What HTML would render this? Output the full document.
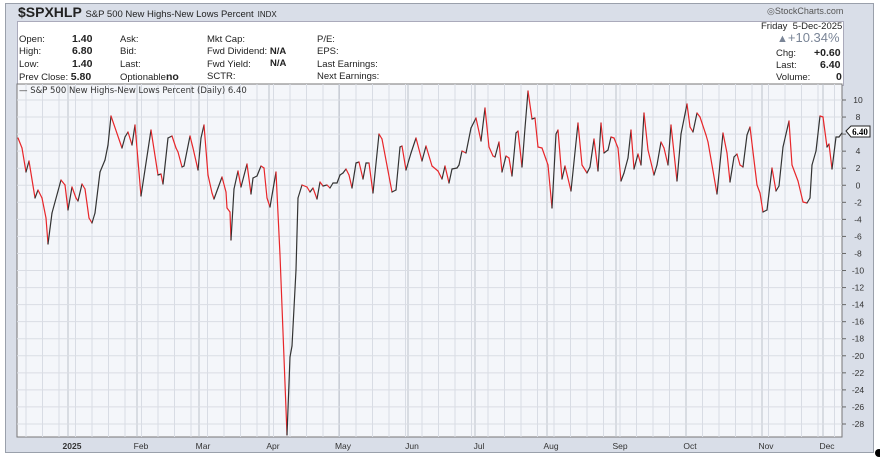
<!DOCTYPE html>
<html><head><meta charset="utf-8"><style>
body{margin:0;width:880px;height:457px;background:#fff;font-family:"Liberation Sans",sans-serif;overflow:hidden;position:relative}
.panel{position:absolute;left:5px;top:3px;width:867px;height:448px;background:#d9dee8;border:1px solid #9aa0ab}
.t{position:absolute;font-size:9.5px;color:#222;white-space:nowrap}
.b{font-weight:bold;font-size:10.5px}
.info{position:absolute;left:17px;top:21px;width:825px;height:63px;background:#fff;border:1px solid #aab}
</style></head><body>
<div class="panel"></div>
<div class="t" style="left:18px;top:4px;font-size:14px;font-weight:bold">$SPXHLP <span style="font-size:9.5px;font-weight:normal">S&amp;P 500 New Highs-New Lows Percent</span> <span style="font-size:8px;font-weight:normal">INDX</span></div>
<div class="t" style="left:767px;top:6px;color:#555;font-size:9px">◎StockCharts.com</div>
<div class="info"></div>
<div class="t" style="left:19px;top:34px">Open:</div><div class="t b" style="left:72px;top:33px">1.40</div>
<div class="t" style="left:19px;top:46px">High:</div><div class="t b" style="left:72px;top:45px">6.80</div>
<div class="t" style="left:19px;top:59px">Low:</div><div class="t b" style="left:72px;top:58px">1.40</div>
<div class="t" style="left:19px;top:71px">Prev Close: <b style="font-size:10.5px">5.80</b></div>
<div class="t" style="left:120px;top:34px">Ask:</div><div class="t" style="left:120px;top:46px">Bid:</div><div class="t" style="left:120px;top:59px">Last:</div><div class="t" style="left:120px;top:71px">Optionable<b style="font-size:10.5px">no</b></div>
<div class="t" style="left:207px;top:34px">Mkt Cap:</div><div class="t" style="left:207px;top:46px">Fwd Dividend: <b>N/A</b></div><div class="t" style="left:207px;top:59px">Fwd Yield:</div><div class="t" style="left:270px;top:58px;font-weight:bold">N/A</div><div class="t" style="left:207px;top:71px">SCTR:</div>
<div class="t" style="left:317px;top:34px">P/E:</div><div class="t" style="left:317px;top:46px">EPS:</div><div class="t" style="left:317px;top:59px">Last Earnings:</div><div class="t" style="left:317px;top:71px">Next Earnings:</div>
<div class="t" style="left:761px;top:21px">Friday&nbsp; 5-Dec-2025</div>
<div class="t" style="left:777px;top:30px;font-size:13px;color:#7a8597"><span style="font-size:11px">▲</span>+10.34%</div>
<div class="t" style="left:776px;top:48px">Chg:</div><div class="t b" style="left:814px;top:47px">+0.60</div>
<div class="t" style="left:776px;top:60px">Last:</div><div class="t b" style="left:820px;top:59px">6.40</div>
<div class="t" style="left:776px;top:72px">Volume:</div><div class="t b" style="left:836px;top:71px">0</div>
<svg style="position:absolute;left:0;top:0" width="880" height="457" id="s"></svg>
<div class="t" style="left:19px;top:86px;font-family:'DejaVu Sans',sans-serif;font-size:8.5px;color:#333">— S&amp;P 500 New Highs-New Lows Percent (Daily) 6.40</div>
<script>
var s=document.getElementById('s'),h='';
h+='<rect x="17" y="84" width="825" height="353" fill="#f4f6fa" stroke="#777"/>';
function Y(v){return 100+(10-v)*8.526}
for(var x=26;x<842;x+=16.5)h+='<line x1="'+x+'" y1="84" x2="'+x+'" y2="437" stroke="#d8dce4"/>';
var m=[[72,'2025'],[141,'Feb'],[203,'Mar'],[273,'Apr'],[343,'May'],[412,'Jun'],[479,'Jul'],[551,'Aug'],[620,'Sep'],[690,'Oct'],[766,'Nov'],[827,'Dec']];
m.forEach(function(a){h+='<line x1="'+(a[0]-4)+'" y1="84" x2="'+(a[0]-4)+'" y2="437" stroke="#bcc1ca"/>';h+='<text x="'+a[0]+'" y="449" font-size="8.5" fill="#333" text-anchor="middle" font-family="Liberation Sans"'+(a[1]=='2025'?' font-weight="bold"':'')+'>'+a[1]+'</text>'});
for(var v=10;v>=-28;v-=2){var y=Y(v);h+='<line x1="17" y1="'+y+'" x2="842" y2="'+y+'" stroke="#dadde4"/><line x1="842" y1="'+y+'" x2="846" y2="'+y+'" stroke="#666"/><text x="858" y="'+(y+3)+'" font-size="8.5" fill="#333" text-anchor="middle" font-family="Liberation Sans">'+v+'</text>'}
var p=[18,138,22,148,26,172,29,161,35,198,38,190,42,198,46,218,48,244,52,213,61,180,65,185,68,210,72,187,76,198,78,201,82,184,85,189,89,218,92,223,95,213,100,172,105,160,108,145,111,116,122,148,125,137,128,132,132,145,135,125,141,196,151,130,158,175,161,174,163,184,168,138,172,136,176,148,178,152,182,167,184,166,190,136,193,148,198,170,201,138,204,125,208,175,212,193,214,199,218,188,222,177,226,192,227,208,230,212,231,240,234,189,238,171,241,187,247,164,251,194,253,178,257,176,261,166,264,168,267,198,270,207,276,172,280,255,287,435,290,357,292,346,296,270,298,198,302,185,307,187,310,192,313,188,317,199,320,182,323,186,327,185,330,188,333,183,337,183,340,175,343,173,346,169,349,175,352,188,356,163,359,162,363,179,366,163,369,163,373,193,379,134,382,139,392,192,396,190,400,147,402,146,406,170,411,153,416,138,422,161,426,146,432,166,438,171,442,179,445,166,449,183,452,169,457,168,459,165,462,151,466,153,471,128,476,118,481,141,485,108,489,147,493,156,495,157,499,142,502,172,506,156,509,158,512,176,516,133,518,131,522,167,525,128,528,91,532,119,535,118,538,147,542,148,548,165,552,208,556,134,558,130,562,179,565,166,571,191,578,123,582,165,587,173,590,167,594,139,598,171,601,123,604,153,608,150,611,137,614,138,618,148,621,181,624,173,628,158,631,130,634,169,638,154,641,165,644,113,648,150,654,175,657,165,661,142,664,148,668,165,671,125,677,181,681,134,687,104,690,127,693,132,697,113,700,117,706,135,708,142,717,194,723,133,727,153,730,182,734,157,737,154,740,165,743,167,747,135,750,127,757,185,760,193,763,212,767,210,772,168,776,191,779,186,783,147,789,121,792,165,798,181,803,202,807,203,810,198,812,165,816,151,820,116,823,117,827,147,829,144,832,169,836,137,839,137,842,133];
for(var i=0;i+3<p.length;i+=2){h+='<line x1="'+p[i]+'" y1="'+p[i+1]+'" x2="'+p[i+2]+'" y2="'+p[i+3]+'" stroke="'+(p[i+3]>p[i+1]?'#e8262a':'#333')+'" stroke-width="1.2" stroke-linecap="round"/>'}
h+='<path d="M846 131 L851 126 L870 126 L870 137 L851 137 Z" fill="#fff" stroke="#222"/><text x="860" y="135" font-size="9" font-weight="bold" text-anchor="middle" font-family="Liberation Serif">6.40</text>';
h+='<circle cx="879" cy="453" r="4" fill="#000"/>';
s.innerHTML=h;
</script>
</body></html>
